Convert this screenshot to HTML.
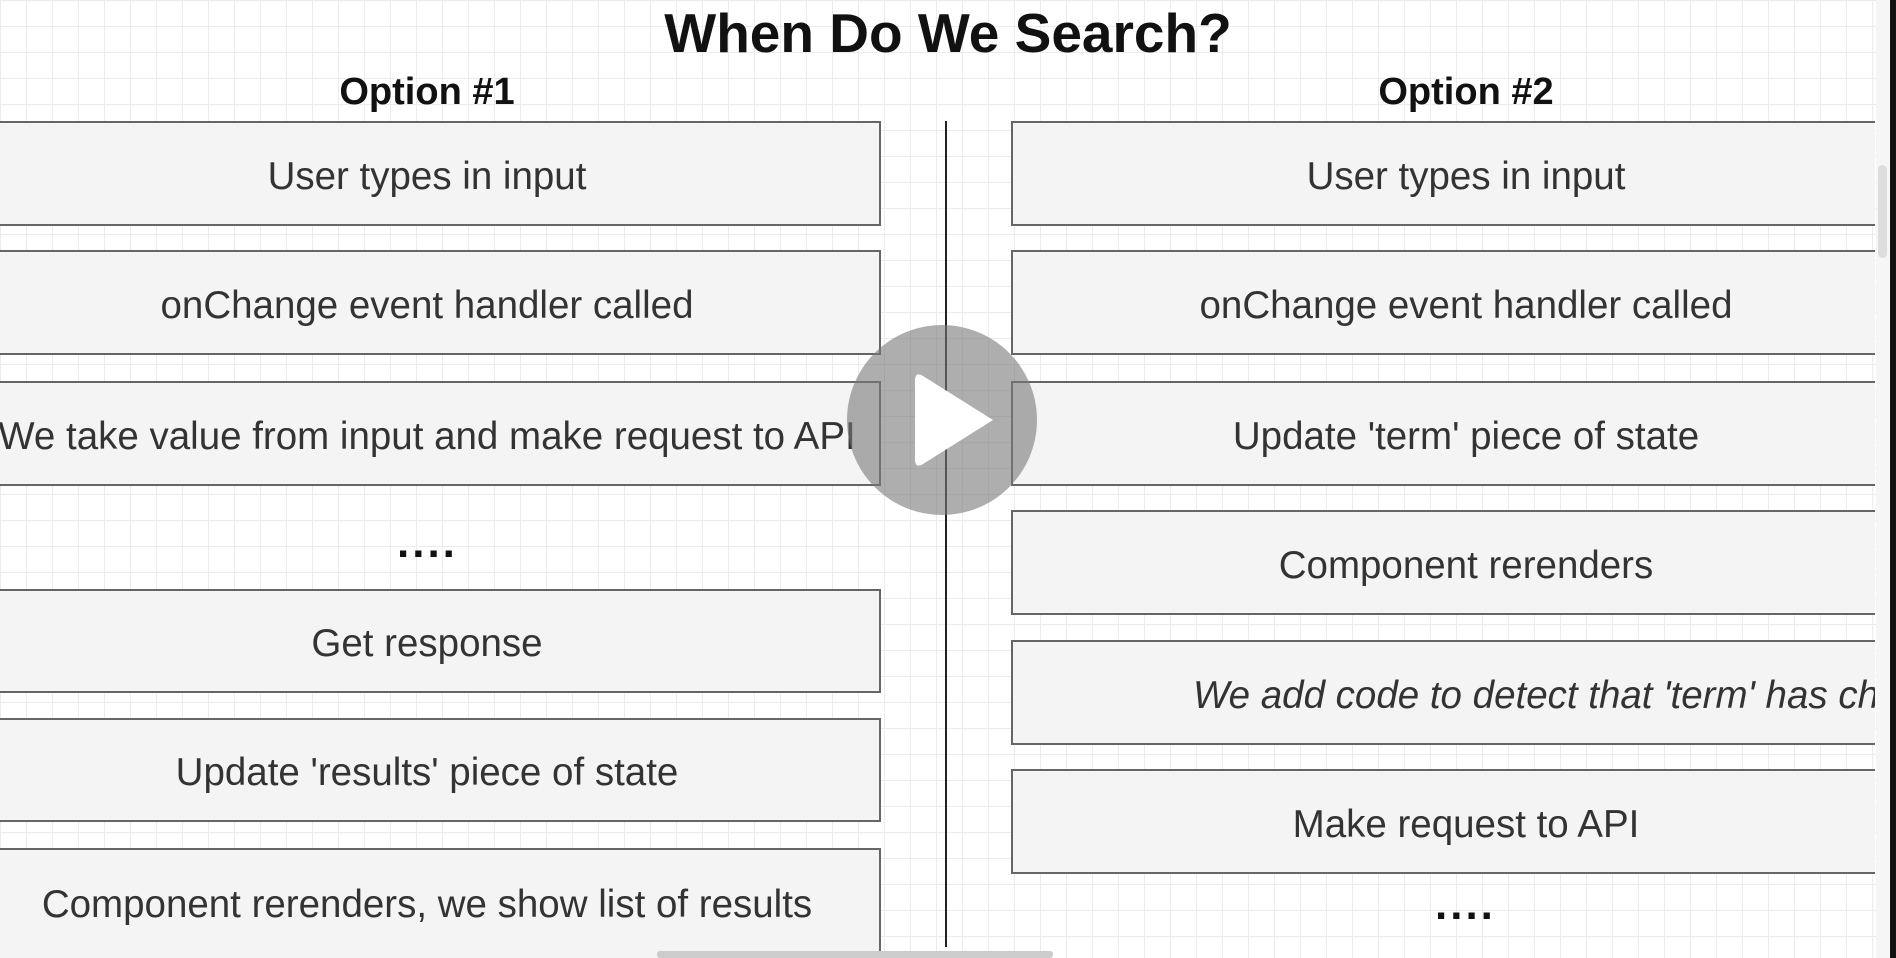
<!DOCTYPE html>
<html><head><meta charset="utf-8"><style>
html,body{margin:0;padding:0}
body{width:1896px;height:958px;overflow:hidden;position:relative;background-color:#fff;
background-image:linear-gradient(#ececec 1px,transparent 1px),linear-gradient(90deg,#ececec 1px,transparent 1px);
background-size:26px 26px;font-family:"Liberation Sans",sans-serif;color:#333}
.t{position:absolute;left:0;width:1896px;text-align:center;top:1px;font-weight:bold;font-size:55px;color:#111}
.h{position:absolute;font-weight:bold;font-size:38px;color:#111;text-align:center;width:600px}
.b{position:absolute;height:100px;background:#f4f4f4;border:2px solid #666;box-sizing:border-box;display:flex;align-items:center;justify-content:center;font-size:38.5px;white-space:nowrap;overflow:hidden;padding-top:6px}
.L{left:-27px;width:908px}
.R{left:1011px;width:910px}
.d{position:absolute;font-size:44px;font-weight:bold;color:#111;letter-spacing:3px}
#clip{position:absolute;left:0;top:0;width:1875px;height:958px;overflow:hidden}
</style></head><body>
<div class="t">When Do We Search?</div>
<div class="h" style="left:127px;top:71px">Option #1</div>
<div class="h" style="left:1166px;top:71px">Option #2</div>
<div style="position:absolute;left:945px;top:121px;width:2px;height:826px;background:#222"></div>
<div id="clip">
<div class="b L" style="top:121px;height:105px">User types in input</div>
<div class="b L" style="top:250px;height:105px">onChange event handler called</div>
<div class="b L" style="top:381px;height:105px">We take value from input and make request to API</div>
<div class="d" style="left:397px;top:518px">....</div>
<div class="b L" style="top:589px;height:104px">Get response</div>
<div class="b L" style="top:718px;height:104px">Update 'results' piece of state</div>
<div class="b L" style="top:848px;height:112px;align-items:flex-start;padding-top:33px">Component rerenders, we show list of results</div>

<div class="b R" style="top:121px;height:105px">User types in input</div>
<div class="b R" style="top:250px;height:105px">onChange event handler called</div>
<div class="b R" style="top:381px;height:105px">Update 'term' piece of state</div>
<div class="b R" style="top:510px;height:105px">Component rerenders</div>
<div class="b R" style="top:640px;height:105px;justify-content:flex-start;padding-left:180px;font-style:italic">We add code to detect that 'term' has changed</div>
<div class="b R" style="top:769px;height:105px">Make request to API</div>
<div class="d" style="left:1435px;top:880px">....</div>
</div>
<div style="position:absolute;left:1876px;top:0;width:14px;height:958px;background:#f6f6f6"></div>
<div style="position:absolute;left:1878px;top:165px;width:9px;height:93px;background:#ddd;border-radius:5px"></div>
<div style="position:absolute;left:1890px;top:0;width:6px;height:958px;background:#111"></div>
<div style="position:absolute;left:657px;top:951px;width:396px;height:7px;background:#ccc;border-radius:3px"></div>

<svg style="position:absolute;left:847px;top:325px" width="190" height="190">
<circle cx="95" cy="95" r="95" fill="rgba(120,120,120,0.6)"/>
<path d="M146 95 L76 51 Q68 46 68 56 L68 134 Q68 144 76 139 Z" fill="#fff"/>
</svg>
</body></html>
